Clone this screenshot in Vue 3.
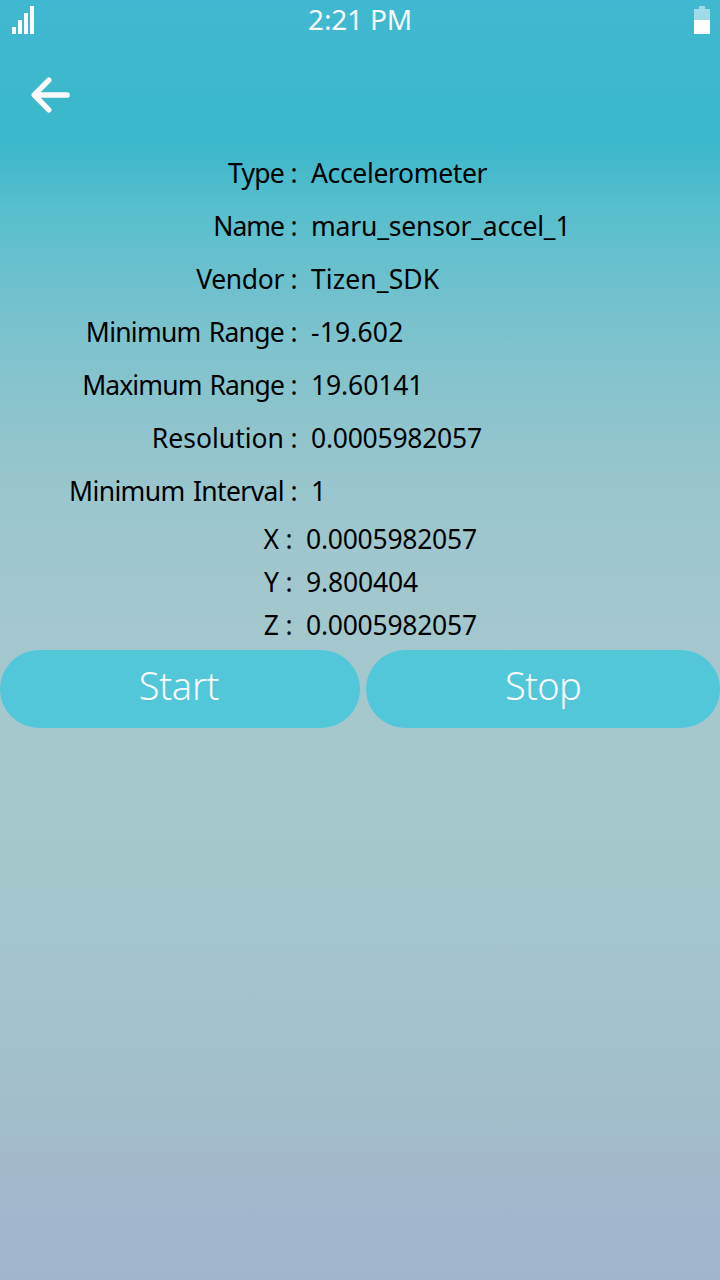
<script setup>
// tracking: letter spacing in px for the label and for the value
const details = [
  { label: 'Type', value: 'Accelerometer', tracking: [-0.75, -0.35] },
  { label: 'Name', value: 'maru_sensor_accel_1', tracking: [-1, -0.2] },
  { label: 'Vendor', value: 'Tizen_SDK', tracking: [-0.35, 0.1] },
  { label: 'Minimum Range', value: '-19.602', tracking: [-0.75, 0.15] },
  { label: 'Maximum Range', value: '19.60141', tracking: [-0.9, -0.1] },
  { label: 'Resolution', value: '0.0005982057', tracking: [0, -0.25] },
  { label: 'Minimum Interval', value: '1', tracking: [-0.62, 0] },
]
const axes = [
  { label: 'X', value: '0.0005982057', tracking: -0.25 },
  { label: 'Y', value: '9.800404', tracking: -0.15 },
  { label: 'Z', value: '0.0005982057', tracking: -0.25 },
]
</script>

<template>
  <main class="screen">
    <header class="status">
      <svg class="signal" width="22" height="28" viewBox="0 0 22 28" fill="#fafafa" shape-rendering="crispEdges">
        <rect x="0" y="21" width="4" height="7" />
        <rect x="6" y="14" width="4" height="14" />
        <rect x="12" y="7" width="4" height="21" />
        <rect x="18" y="0" width="4" height="28" />
      </svg>
      <span class="clock">2:21 PM</span>
      <svg class="battery" width="16" height="28" viewBox="0 0 16 28" shape-rendering="crispEdges">
        <path d="M5 0h6v3h5v11H0V3h5z" fill="#a0dce7" />
        <rect y="14" width="16" height="14" fill="#fff" />
      </svg>
    </header>
    <nav class="bar">
      <svg width="40" height="36" viewBox="0 0 40 36" fill="none" stroke="#fafafa" stroke-width="5.4" stroke-linecap="round" stroke-linejoin="round">
        <path d="M17.8 3.2L3.2 18l14.6 14.8M4 18H36.2" />
      </svg>
    </nav>
    <section class="details">
      <div v-for="d in details" :key="d.label" class="row">
        <span class="label" :style="{ letterSpacing: d.tracking[0] + 'px' }">{{ d.label }}</span>
        <span class="colon">:</span>
        <span class="value" :style="{ letterSpacing: d.tracking[1] + 'px' }">{{ d.value }}</span>
      </div>
    </section>
    <section class="axes">
      <div v-for="a in axes" :key="a.label" class="row">
        <span class="label">{{ a.label }}</span>
        <span class="colon">:</span>
        <span class="value" :style="{ letterSpacing: a.tracking + 'px' }">{{ a.value }}</span>
      </div>
    </section>
    <section class="buttons">
      <button>Start</button>
      <button class="stop">Stop</button>
    </section>
  </main>
</template>

<style>
body { margin: 0; }
</style>

<style scoped>
.screen {
  width: 720px;
  height: 1280px;
  overflow: hidden;
  font-family: "Noto Sans", "Open Sans", sans-serif;
  color: #000;
  background: linear-gradient(180deg, #40b8d1 0, #3cb8cc 100px, #3cb8cc 148px, #58bfcd 210px, #80c3cd 350px, #9ac6cd 490px, #a2c7cd 590px, #a5c8cd 740px, #a4c7cc 865px, #a3c3cc 1015px, #a2bfcb 1090px, #a2bdcb 1134px, #a3bacb 1150px, #a3b8cd 1195px, #a2b7cd 1240px, #a1b5cc 1280px);
}
.status {
  display: grid;
  grid-template-columns: 1fr auto 1fr;
  align-items: center;
  height: 40px;
  padding: 0 10px 0 12px;
}
.battery { justify-self: end; }
.clock {
  font-size: 28px;
  line-height: 38px;
  padding: 0 2px 2px 0;
  letter-spacing: -0.2px;
  color: #fafafa;
}
.bar {
  display: flex;
  align-items: center;
  height: 110px;
  padding-left: 31px;
  box-sizing: border-box;
}
.row {
  display: grid;
  grid-template-columns: 284px 16px 1fr;
  height: 53px;
  line-height: 46px;
  font-size: 26.5px;
  white-space: nowrap;
}
.axes .row {
  grid-template-columns: 279px 16px 1fr;
  height: 43px;
  line-height: 36px;
}
.label {
  text-align: right;
  word-spacing: 2px;
}
.colon { padding-left: 6.5px; }
.value { padding-left: 11px; }
.buttons {
  display: grid;
  grid-template-columns: 360px 354px;
  gap: 6px;
}
button {
  height: 78px;
  padding: 0 2px 8px 0;
  border: 0;
  border-radius: 39px;
  background: #52c7da;
  color: #fafafa;
  font: 300 38px/70px "Noto Sans", "Open Sans", sans-serif;
  letter-spacing: -0.3px;
}
.stop {
  padding-right: 0;
  letter-spacing: -0.7px;
}
</style>
